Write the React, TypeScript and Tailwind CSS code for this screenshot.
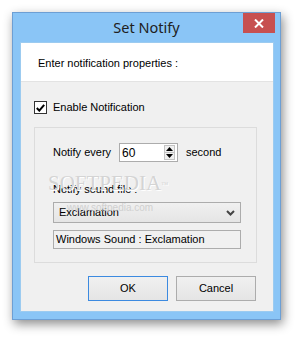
import { useState } from "react";

const ui = "font-['Liberation_Sans',Arial,sans-serif] text-[11px] text-black";

function Spinner() {
  return (
    <div className="flex h-[19px] w-[59px] border border-[#acacac] bg-white">
      <div className="flex flex-1 items-center pl-[2px] text-[12px]">60</div>
      <div className="my-[1px] mr-[2px] flex w-[11px] flex-col border border-[#c4c4c4] bg-[#f0f0f0]">
        <div className="flex flex-1 items-center justify-center border-b border-[#c4c4c4]">
          <svg width="7" height="4" viewBox="0 0 7 4">
            <path d="M0 4 L3.5 0 L7 4 Z" fill="#000" />
          </svg>
        </div>
        <div className="flex flex-1 items-center justify-center">
          <svg width="7" height="4" viewBox="0 0 7 4">
            <path d="M0 0 L3.5 4 L7 0 Z" fill="#000" />
          </svg>
        </div>
      </div>
    </div>
  );
}

export default function App() {
  const [enabled, setEnabled] = useState(true);

  return (
    <div className={`relative h-[340px] w-[301px] overflow-hidden bg-white pl-[12px] pt-[12px] ${ui}`}>
      <div className="relative flex h-[308px] w-[269px] flex-col border border-[#6d9fd4] bg-[#8ac5f6] shadow-[2px_4px_10px_rgba(0,0,0,0.45)]">
        {/* title bar */}
        <div className="flex h-[29px] items-center justify-center pt-[1px] font-['Noto_Sans',sans-serif] text-[14.5px] text-[#202020]">
          Set Notify
        </div>
        <button className="absolute right-[5px] top-0 flex h-[20px] w-[32px] items-center justify-center bg-[#c75050]">
          <svg width="10" height="9" viewBox="0 0 10 9">
            <path d="M1 0.5 L9 8.5 M9 0.5 L1 8.5" stroke="#fff" strokeWidth="2" />
          </svg>
        </button>

        {/* client area */}
        <div className="ml-[7px] mr-[6px] flex h-[270px] flex-col border border-[#9ccbf0] bg-[#f0f0f0]">
          <div className="flex h-[39px] items-center border-b border-[#e3e3e3] bg-white pl-[17px] pt-[2px]">
            Enter notification properties :
          </div>

          <div className="flex flex-col pl-[13px]">
            <label className="mt-[19px] flex h-[13px] items-center gap-[6px]" onClick={() => setEnabled(!enabled)}>
              <span className="flex h-[13px] w-[13px] items-center justify-center border border-[#333] bg-white">
                {enabled && (
                  <svg width="9" height="8" viewBox="0 0 9 8">
                    <path d="M0.8 4 L3.3 6.6 L8.2 0.8" stroke="#000" strokeWidth="2" fill="none" />
                  </svg>
                )}
              </span>
              Enable Notification
            </label>

            <div className="mt-[13px] flex h-[136px] w-[223px] flex-col border border-[#dcdcdc] pl-[18px] pt-[15px]">
              <div className="flex h-[19px] items-center">
                <span className="w-[66px]">Notify every</span>
                <Spinner />
                <span className="ml-[8px]">second</span>
              </div>

              <div className="mt-[20px] h-[14px] leading-[14px]">Notify sound file :</div>

              <div className="mt-[6px] flex h-[21px] w-[188px] items-center justify-between border border-[#acacac] bg-gradient-to-b from-[#f0f0f0] to-[#e5e5e5] pl-[5px] pr-[5px]">
                <span>Exclamation</span>
                <svg width="9" height="6" viewBox="0 0 9 6">
                  <path d="M1 1 L4.5 4.5 L8 1" stroke="#444" strokeWidth="2" fill="none" />
                </svg>
              </div>

              <div className="mt-[7px] flex h-[19px] w-[188px] items-center border border-[#acacac] bg-[#f0f0f0] pl-[2px]">
                Windows Sound : Exclamation
              </div>
            </div>
          </div>

          <div className="mt-[13px] flex justify-end gap-[8px] pr-[17px]">
            <button className="h-[25px] w-[80px] border border-[#3c8ae0] bg-gradient-to-b from-[#f0f0f0] to-[#e5e5e5]">
              OK
            </button>
            <button className="h-[25px] w-[80px] border border-[#acacac] bg-gradient-to-b from-[#f0f0f0] to-[#e5e5e5]">
              Cancel
            </button>
          </div>
        </div>
      </div>

      {/* watermark */}
      <div className="pointer-events-none absolute left-[48px] top-[171px] font-['Liberation_Serif',serif] text-[21px] leading-[24px] text-[#d4d4d4] [text-shadow:1px_1px_0_#fff]">
        SOFTPEDIA<sup className="text-[7px]">™</sup>
      </div>
      <div className="pointer-events-none absolute left-[67px] top-[202px] font-['Liberation_Sans',sans-serif] text-[10px] leading-[11px] text-[#d0d0d0]">
        www.softpedia.com
      </div>
    </div>
  );
}
